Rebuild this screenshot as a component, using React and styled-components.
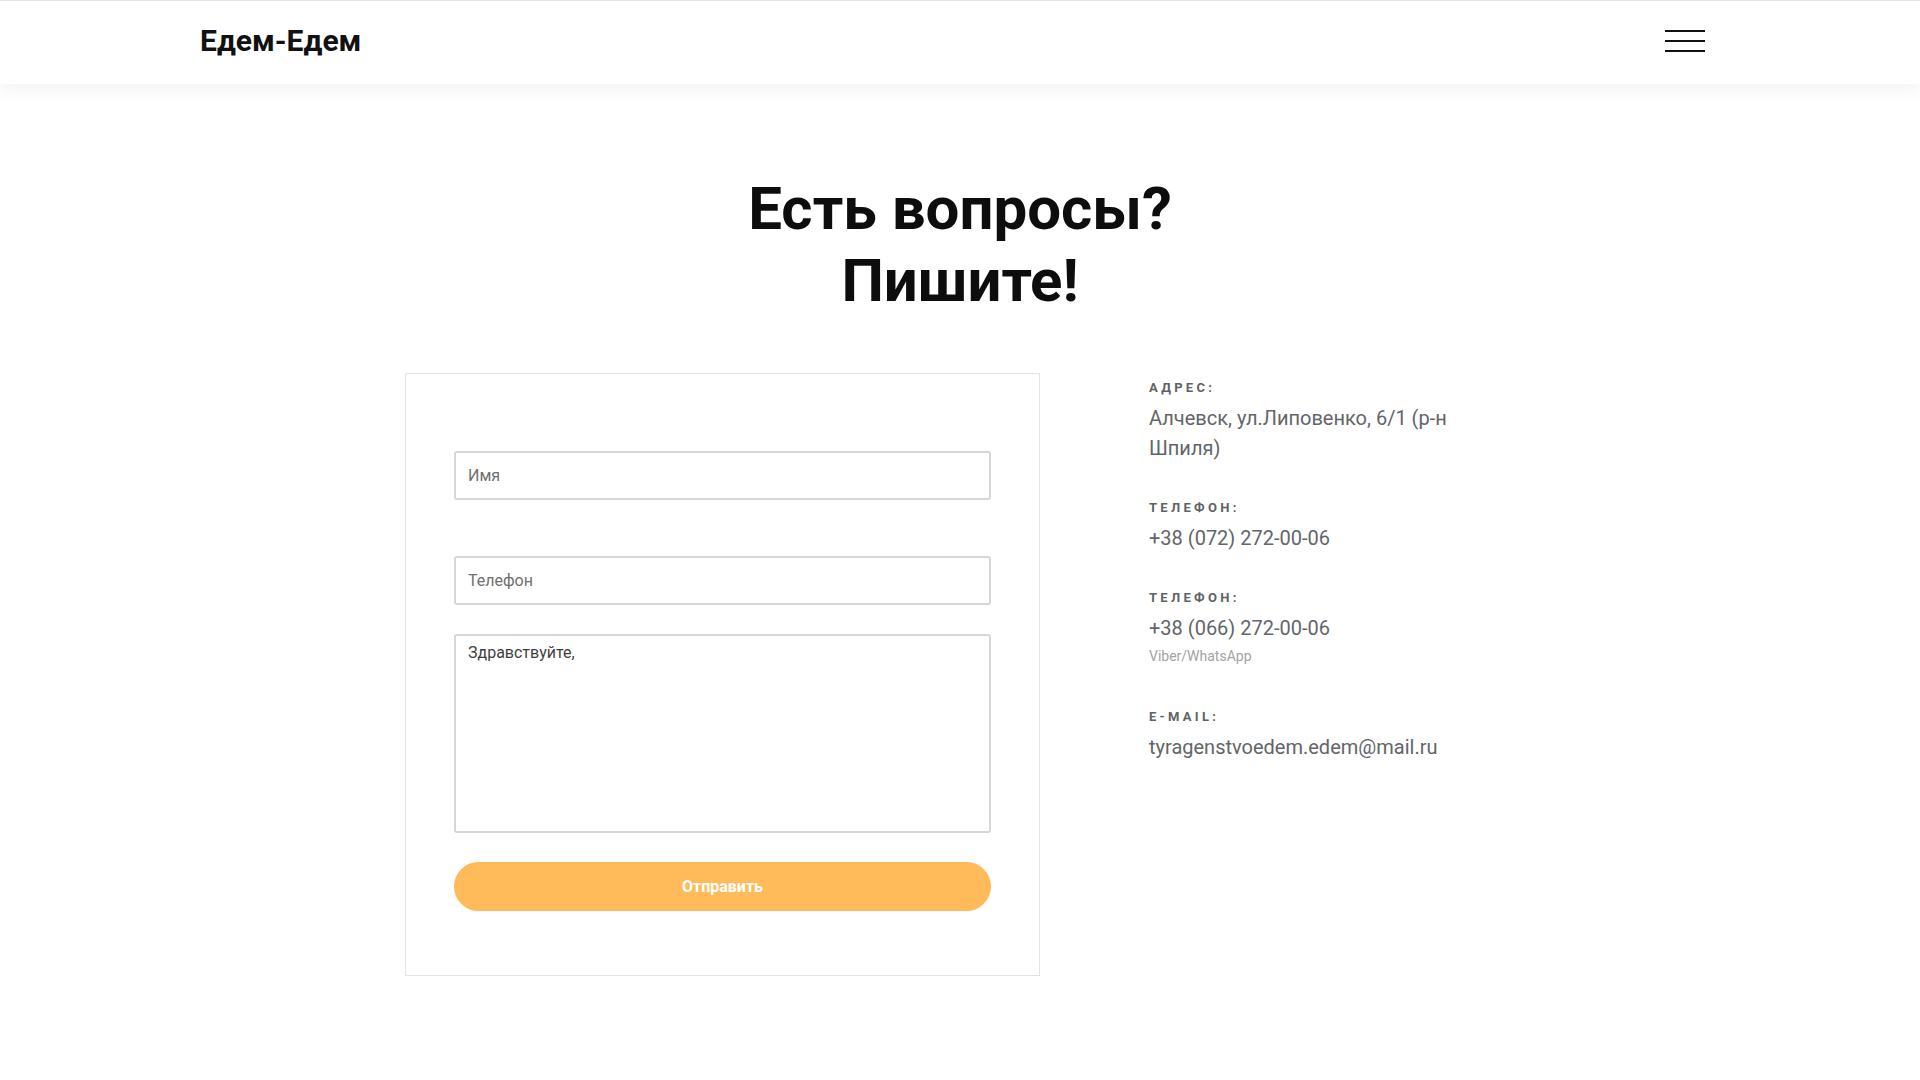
import React from 'react';
import styled, { createGlobalStyle } from 'styled-components';

const GlobalStyle = createGlobalStyle`
  * {
    box-sizing: border-box;
  }
  body {
    margin: 0;
    background: #fff;
    font-family: Roboto, 'Liberation Sans', Arial, sans-serif;
    color: #111;
  }
`;

const Header = styled.header`
  height: 84px;
  border-top: 1px solid #e4e4e4;
  background: #fff;
  box-shadow: 0 6px 16px rgba(0, 0, 0, 0.05);
  display: flex;
  align-items: center;
  justify-content: space-between;
  padding: 0 215px 3px 200px;
  position: relative;
`;

const Logo = styled.a`
  margin-bottom: 2px;
  font-size: 30px;
  font-weight: 700;
  color: #111;
  text-decoration: none;
`;

const Burger = styled.button`
  width: 40px;
  height: 22px;
  padding: 0;
  border: 0;
  background: none;
  display: flex;
  flex-direction: column;
  justify-content: space-between;
  cursor: pointer;
  span {
    display: block;
    height: 2px;
    background: #111;
  }
`;

const Section = styled.section`
  padding: 89px 0 100px;
`;

const Title = styled.h2`
  margin: 0 0 56px;
  text-align: center;
  font-size: 60px;
  line-height: 72px;
  font-weight: 700;
  color: #0d0d0d;
`;

const Row = styled.div`
  width: 1110px;
  margin: 0 auto;
  display: flex;
  align-items: flex-start;
  gap: 109px;
`;

const FormBox = styled.form`
  width: 635px;
  border: 1px solid #e3e3e3;
  padding: 77px 48px 64px;
  display: flex;
  flex-direction: column;
`;

const Field = styled.input`
  height: 49px;
  margin-bottom: ${(p) => p.$gap}px;
  border: 2px solid #d3d7dc;
  border-radius: 3px;
  padding: 0 12px;
  font-family: inherit;
  font-size: 16px;
  color: #444;
  outline: none;
  &::placeholder {
    color: #6f6f6f;
  }
`;

const Message = styled.textarea`
  height: 199px;
  margin-bottom: 29px;
  border: 2px solid #d3d7dc;
  border-radius: 3px;
  padding: 7px 12px;
  font-family: inherit;
  font-size: 16px;
  line-height: 20px;
  color: #3f3f3f;
  resize: none;
  outline: none;
`;

const Submit = styled.button`
  height: 49px;
  border: 0;
  border-radius: 25px;
  background: #ffbb5a;
  color: #fff;
  font-family: inherit;
  font-size: 16px;
  font-weight: 700;
  cursor: pointer;
`;

const Contacts = styled.div`
  width: 340px;
  padding-top: 5px;
  display: flex;
  flex-direction: column;
  gap: 35px;
`;

const Item = styled.div`
  display: flex;
  flex-direction: column;
`;

const Label = styled.div`
  font-size: 13px;
  line-height: 20px;
  font-weight: 700;
  letter-spacing: 3.3px;
  text-transform: uppercase;
  color: #5f6266;
  margin-bottom: 5px;
`;

const Value = styled.div`
  font-size: 20px;
  line-height: 30px;
  color: #62656a;
`;

const Note = styled.div`
  font-size: 14px;
  line-height: 20px;
  margin: 3px 0 6px;
  color: #a3a3a3;
`;

const contacts = [
  { label: 'Адрес:', value: 'Алчевск, ул.Липовенко, 6/1 (р-н Шпиля)' },
  { label: 'Телефон:', value: '+38 (072) 272-00-06' },
  { label: 'Телефон:', value: '+38 (066) 272-00-06', note: 'Viber/WhatsApp' },
  { label: 'E-mail:', value: 'tyragenstvoedem.edem@mail.ru' },
];

const App = () => (
  <>
    <GlobalStyle />
    <Header>
      <Logo href="#">Едем-Едем</Logo>
      <Burger type="button" aria-label="menu">
        <span />
        <span />
        <span />
      </Burger>
    </Header>
    <Section>
      <Title>
        Есть вопросы?
        <br />
        Пишите!
      </Title>
      <Row>
        <FormBox onSubmit={(e) => e.preventDefault()}>
          <Field type="text" placeholder="Имя" $gap={56} />
          <Field type="tel" placeholder="Телефон" $gap={29} />
          <Message defaultValue="Здравствуйте," />
          <Submit type="submit">Отправить</Submit>
        </FormBox>
        <Contacts>
          {contacts.map((item, index) => (
            <Item key={`contact-${index.toString()}`}>
              <Label>{item.label}</Label>
              <Value>{item.value}</Value>
              {item.note && <Note>{item.note}</Note>}
            </Item>
          ))}
        </Contacts>
      </Row>
    </Section>
  </>
);

export default App;
